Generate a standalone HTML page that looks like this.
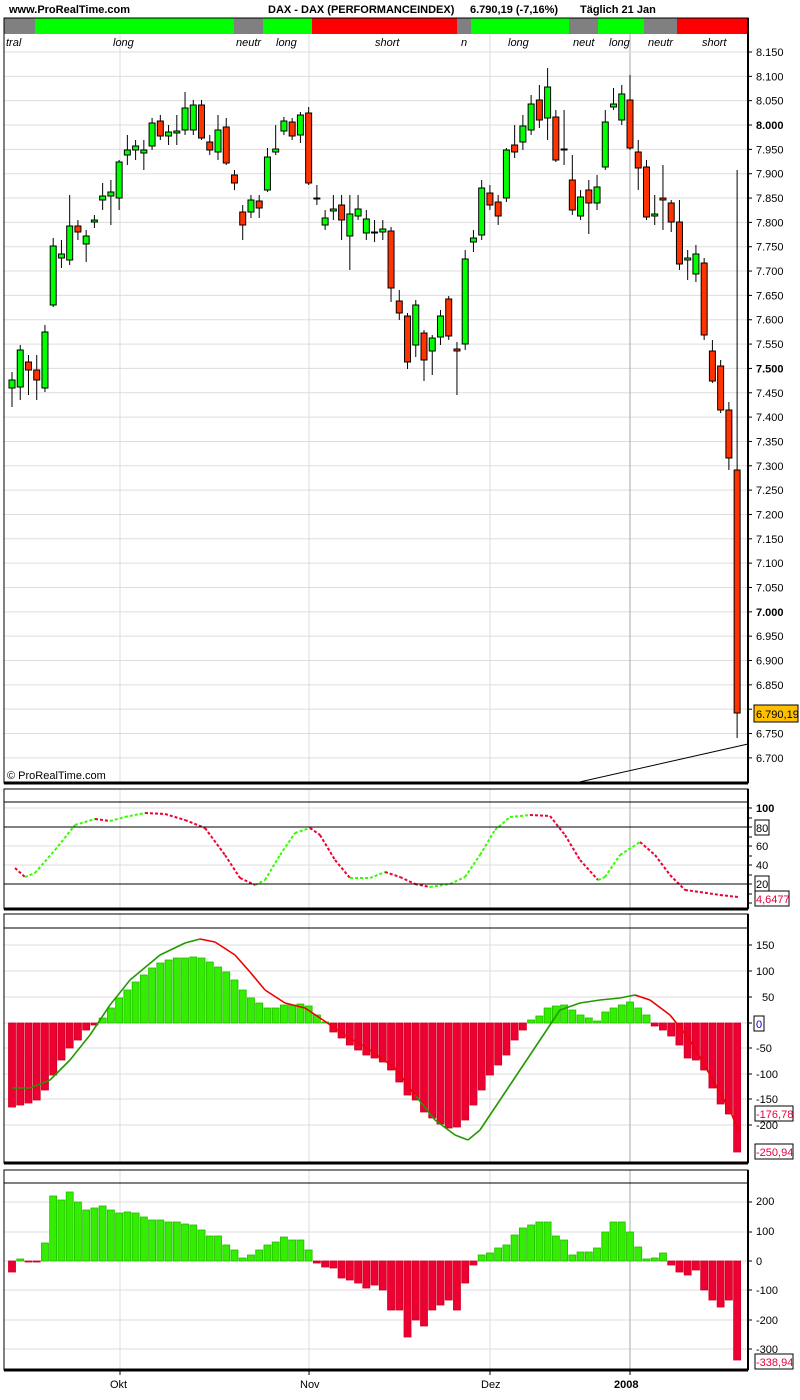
<!DOCTYPE html>
<html><head><meta charset="utf-8"><style>
body{margin:0;background:#fff;width:800px;height:1400px;overflow:hidden;font-family:"Liberation Sans",sans-serif}
svg{position:absolute;left:0;top:0}
text{font-family:"Liberation Sans",sans-serif;font-size:11px}
</style></head><body>
<svg id="s" width="800" height="1400" xmlns="http://www.w3.org/2000/svg">
<rect width="800" height="1400" fill="#fff"/>
<g id="grid"></g>
<rect x="4" y="18" width="31" height="16" fill="#808080"/>
<rect x="35" y="18" width="199" height="16" fill="#00ff00"/>
<rect x="234" y="18" width="29" height="16" fill="#808080"/>
<rect x="263" y="18" width="49" height="16" fill="#00ff00"/>
<rect x="312" y="18" width="145" height="16" fill="#ff0000"/>
<rect x="457" y="18" width="14" height="16" fill="#808080"/>
<rect x="471" y="18" width="98" height="16" fill="#00ff00"/>
<rect x="569" y="18" width="29" height="16" fill="#808080"/>
<rect x="598" y="18" width="46" height="16" fill="#00ff00"/>
<rect x="644" y="18" width="33" height="16" fill="#808080"/>
<rect x="677" y="18" width="71" height="16" fill="#ff0000"/>
<text x="6" y="46" font-style="italic" font-size="11">tral</text>
<text x="113" y="46" font-style="italic" font-size="11">long</text>
<text x="236" y="46" font-style="italic" font-size="11">neutr</text>
<text x="276" y="46" font-style="italic" font-size="11">long</text>
<text x="375" y="46" font-style="italic" font-size="11">short</text>
<text x="461" y="46" font-style="italic" font-size="11">n</text>
<text x="508" y="46" font-style="italic" font-size="11">long</text>
<text x="573" y="46" font-style="italic" font-size="11">neut</text>
<text x="609" y="46" font-style="italic" font-size="11">long</text>
<text x="648" y="46" font-style="italic" font-size="11">neutr</text>
<text x="702" y="46" font-style="italic" font-size="11">short</text>
<line x1="4" y1="52" x2="748" y2="52" stroke="#ddd"/>
<text x="9" y="13" font-weight="bold" font-size="12">www.ProRealTime.com</text>
<text x="268" y="13" font-weight="bold" font-size="12">DAX - DAX (PERFORMANCEINDEX)</text>
<text x="470" y="13" font-weight="bold" font-size="12">6.790,19 (-7,16%)</text>
<text x="580" y="13" font-weight="bold" font-size="12">Täglich  21 Jan</text>
<g id="dyn"></g>
<line x1="575" y1="783" x2="748" y2="744" stroke="#000"/>
<text x="7" y="779" font-size="10">© ProRealTime.com</text>
<g id="labels"></g>
<g fill="none" stroke="#000">
<path d="M4 18V783H748V18Z" stroke-width="1"/>
<line x1="4" y1="783" x2="748" y2="783" stroke-width="3"/>
<line x1="748" y1="18" x2="748" y2="783" stroke-width="2"/>
<rect x="4" y="789" width="744" height="120"/>
<line x1="4" y1="909" x2="748" y2="909" stroke-width="3"/><line x1="748" y1="789" x2="748" y2="909" stroke-width="2"/>
<line x1="4" y1="802" x2="748" y2="802"/>
<line x1="4" y1="827" x2="748" y2="827"/>
<line x1="4" y1="884" x2="748" y2="884"/>
<rect x="4" y="914" width="744" height="249"/>
<line x1="4" y1="1163" x2="748" y2="1163" stroke-width="3"/><line x1="748" y1="914" x2="748" y2="1163" stroke-width="2"/>
<line x1="4" y1="928" x2="748" y2="928"/>
<rect x="4" y="1170" width="744" height="200"/>
<line x1="4" y1="1370" x2="748" y2="1370" stroke-width="3"/><line x1="748" y1="1170" x2="748" y2="1370" stroke-width="2"/>
<line x1="4" y1="1183" x2="748" y2="1183"/>
</g>
<g stroke="#000" id="ticks"></g>
<text x="756" y="812" font-weight="bold" font-size="12">100</text>
<rect x="755" y="820" width="14" height="15" fill="#fff" stroke="#000"/><text x="756" y="832">80</text>
<text x="756" y="850">60</text><text x="756" y="869">40</text>
<rect x="755" y="876" width="14" height="15" fill="#fff" stroke="#000"/><text x="756" y="888">20</text>
<rect x="755" y="891" width="34" height="15" fill="#fff" stroke="#000"/><text x="756" y="903" fill="#e8003a">4,6477</text>
<text x="756" y="949">150</text><text x="756" y="975">100</text><text x="762" y="1001">50</text>
<rect x="754" y="1016" width="10" height="15" fill="#fff" stroke="#000"/><text x="756" y="1028" fill="#0000cc">0</text>
<text x="756" y="1052">-50</text><text x="756" y="1078">-100</text><text x="756" y="1103">-150</text>
<text x="756" y="1129">-200</text>
<rect x="755" y="1106" width="38" height="15" fill="#fff" stroke="#000"/><text x="756" y="1118" fill="#e8003a">-176,78</text>
<rect x="755" y="1144" width="38" height="15" fill="#fff" stroke="#000"/><text x="756" y="1156" fill="#e8003a">-250,94</text>
<text x="756" y="1205">200</text><text x="756" y="1235">100</text><text x="756" y="1265">0</text>
<text x="756" y="1294">-100</text><text x="756" y="1324">-200</text><text x="756" y="1353">-300</text>
<rect x="755" y="1354" width="38" height="15" fill="#fff" stroke="#000"/><text x="756" y="1366" fill="#e8003a">-338,94</text>
<text x="110" y="1388">Okt</text><text x="300" y="1388">Nov</text><text x="481" y="1388">Dez</text>
<text x="614" y="1388" font-weight="bold">2008</text>
<rect x="754" y="705" width="44" height="17" fill="#ffc000" stroke="#000"/><text x="756" y="718">6.790,19</text>
</svg>
<script>
var NS="http://www.w3.org/2000/svg";
function el(p,t,a){var e=document.createElementNS(NS,t);for(var k in a)e.setAttribute(k,a[k]);p.appendChild(e);return e;}
var g=document.getElementById('grid'),d=document.getElementById('dyn'),L=document.getElementById('labels'),T=document.getElementById('ticks');
for(var i=0;i<=29;i++){var y=52+i*24.34;el(g,'line',{x1:4,x2:748,y1:y,y2:y,stroke:'#ddd'});
var p=8150-i*50;var s=(p/1000).toFixed(3);var t=el(L,'text',{x:756,y:y+4});if(p%500==0)t.setAttribute('font-weight','bold');t.textContent=s;el(L,'line',{x1:748,x2:752,y1:y,y2:y,stroke:'#000'});}
[808,846,865].forEach(function(y){el(g,'line',{x1:4,x2:748,y1:y,y2:y,stroke:'#ddd'})});
[808,818,827,837,846,856,865,875,884,894,903].forEach(function(y){el(T,'line',{x1:748,x2:752,y1:y,y2:y})});
[945,971,997,1048,1074,1099,1125,1023].forEach(function(y){el(g,'line',{x1:4,x2:748,y1:y,y2:y,stroke:'#ddd'});el(T,'line',{x1:748,x2:752,y1:y,y2:y})});
[1202,1232,1261,1290,1320,1349].forEach(function(y){el(g,'line',{x1:4,x2:748,y1:y,y2:y,stroke:'#ddd'});el(T,'line',{x1:748,x2:752,y1:y,y2:y})});
[[120,'#ddd'],[309,'#ddd'],[490,'#ddd'],[630,'#aaa']].forEach(function(a){[[34,783],[789,909],[914,1163],[1170,1370]].forEach(function(r){el(g,'line',{x1:a[0],x2:a[0],y1:r[0],y2:r[1],stroke:a[1]})});el(g,'line',{x1:a[0],x2:a[0],y1:1370,y2:1375,stroke:'#000'});});
var C=[[380,388,372,407,'g'],[350,387,345,400,'g'],[362,370,355,395,'r'],[370,380,355,400,'r'],[332,388,325,392,'g'],[246,305,238,307,'g'],[254,258,240,268,'g'],[226,260,195,265,'g'],[226,232,220,240,'r'],[236,244,230,262,'g'],[220,222,215,228,'g'],[196,200,183,210,'g'],[192,196,180,225,'g'],[162,198,160,210,'g'],[150,155,135,165,'g'],[146,150,140,160,'g'],[150,153,140,170,'g'],[123,146,118,150,'g'],[121,136,115,140,'r'],[132,136,125,145,'g'],[131,133,115,145,'g'],[108,130,92,135,'g'],[105,130,100,135,'g'],[105,138,100,140,'r'],[142,150,135,155,'r'],[130,152,115,160,'g'],[127,163,118,165,'r'],[175,183,170,190,'r'],[212,225,205,240,'r'],[200,212,195,218,'g'],[201,208,195,218,'r'],[157,190,148,192,'g'],[149,152,125,155,'g'],[121,131,117,135,'g'],[122,136,118,140,'r'],[115,135,112,143,'g'],[113,183,107,185,'r'],[198,199,185,205,'g'],[218,225,210,230,'g'],[209,211,195,220,'g'],[205,220,195,240,'r'],[214,236,195,270,'g'],[209,216,195,220,'g'],[219,233,210,240,'g'],[232,233,220,242,'r'],[229,232,220,240,'g'],[231,288,227,302,'r'],[301,313,290,320,'r'],[316,362,313,369,'r'],[305,345,300,357,'g'],[333,360,330,381,'r'],[338,351,335,375,'g'],[316,337,310,345,'g'],[299,336,296,340,'r'],[349,351,342,395,'r'],[259,344,250,350,'g'],[238,242,230,252,'g'],[188,235,180,240,'g'],[193,205,185,210,'r'],[202,216,195,225,'r'],[150,198,148,202,'g'],[145,152,125,158,'r'],[126,142,115,150,'g'],[104,130,95,135,'g'],[100,120,85,128,'r'],[87,118,68,140,'g'],[117,160,110,162,'r'],[149,150,110,165,'r'],[180,210,155,215,'r'],[197,216,190,220,'g'],[190,203,180,234,'r'],[187,203,175,210,'g'],[122,167,110,170,'g'],[104,107,88,110,'g'],[94,120,85,125,'g'],[100,148,75,150,'r'],[152,168,140,190,'r'],[167,217,160,220,'r'],[214,216,195,225,'g'],[198,200,165,230,'r'],[203,222,200,232,'r'],[222,264,200,270,'r'],[258,260,250,280,'g'],[254,274,245,282,'g'],[263,335,258,340,'r'],[351,381,340,383,'r'],[366,410,360,413,'r'],[410,458,402,470,'r'],[470,713,170,738,'r']];
function X(i){return 12+i*8.24;}
C.forEach(function(c,i){var x=X(i);el(d,'line',{x1:x,x2:x,y1:c[2],y2:c[3],stroke:'#000'});
el(d,'rect',{x:x-3,y:c[0],width:6,height:Math.max(1,c[1]-c[0]),fill:c[4]=='g'?'#00ff00':'#ff3300',stroke:'#000','stroke-width':1});});
var S=[[15,868],[25,877],[35,873],[55,850],[75,825],[95,819],[110,821],[125,817],[145,813],[165,814],[185,820],[205,828],[225,855],[240,878],[255,885],[265,880],[280,855],[295,833],[310,828],[320,835],[335,860],[350,878],[370,878],[385,872],[400,877],[415,884],[430,887],[450,884],[465,877],[480,855],[495,830],[510,817],[530,815],[550,816],[565,835],[580,860],[598,880],[605,877],[620,855],[640,842],[655,855],[670,875],[685,890],[700,892],[720,895],[738,897]];
for(var i=1;i<S.length;i++){var up=S[i][1]<=S[i-1][1];el(d,'line',{x1:S[i-1][0],y1:S[i-1][1],x2:S[i][0],y2:S[i][1],stroke:up?'#33ff00':'#ee0033','stroke-width':2,'stroke-dasharray':'3,2'});}
var H=[1107,1105,1103,1100,1090,1075,1060,1048,1040,1030,1025,1018,1008,998,990,982,975,968,963,960,958,958,957,958,962,967,972,980,990,998,1003,1008,1008,1005,1005,1004,1006,1015,1022,1032,1038,1045,1050,1055,1058,1062,1070,1082,1095,1100,1112,1118,1124,1128,1127,1120,1105,1090,1075,1065,1055,1040,1030,1020,1016,1008,1006,1005,1010,1015,1018,1021,1012,1008,1005,1002,1008,1015,1026,1030,1036,1045,1058,1060,1070,1088,1104,1114,1152];
H.forEach(function(y,i){var x=X(i),z=1023;var neg=y>z;el(d,'rect',{x:x-3.5,y:Math.min(y,z),width:7,height:Math.max(1,Math.abs(y-z)),fill:neg?'#ee0033':'#33ee00',stroke:neg?'#cc0022':'#22bb00','stroke-width':0.8});});
var M=[[12,1088],[30,1088],[50,1080],[70,1060],[90,1035],[110,1005],[130,980],[160,955],[185,943],[200,939],[215,942],[235,955],[250,972],[265,990],[285,1003],[305,1008],[320,1018],[345,1035],[370,1050],[395,1068],[415,1095],[435,1120],[455,1135],[468,1140],[480,1130],[500,1100],[520,1070],[540,1040],[560,1010],[580,1003],[600,1000],[620,998],[635,995],[650,1000],[670,1015],[690,1040],[710,1075],[730,1110],[738,1130]];
for(var i=1;i<M.length;i++){var x=M[i][0];var green=(x<=200)||(x>415&&x<=635);el(d,'line',{x1:M[i-1][0],y1:M[i-1][1],x2:x,y2:M[i][1],stroke:green?'#229900':'#ee0000','stroke-width':1.6});}
var B=[1272,1259,1262,1262,1243,1196,1200,1192,1202,1210,1208,1206,1210,1213,1212,1213,1217,1220,1220,1222,1222,1224,1225,1230,1236,1236,1245,1250,1258,1255,1250,1245,1242,1237,1240,1240,1250,1263,1267,1268,1278,1280,1283,1288,1285,1290,1310,1310,1337,1320,1326,1310,1305,1300,1310,1283,1265,1255,1253,1248,1245,1235,1228,1225,1222,1222,1236,1240,1255,1252,1252,1248,1232,1222,1222,1232,1247,1259,1258,1253,1265,1272,1275,1270,1290,1300,1307,1300,1360];
B.forEach(function(y,i){var x=X(i),z=1261;var neg=y>z;el(d,'rect',{x:x-3.5,y:Math.min(y,z),width:7,height:Math.max(1,Math.abs(y-z)),fill:neg?'#ee0033':'#33ee00',stroke:neg?'#cc0022':'#22bb00','stroke-width':0.8});});
</script>
</body></html>
